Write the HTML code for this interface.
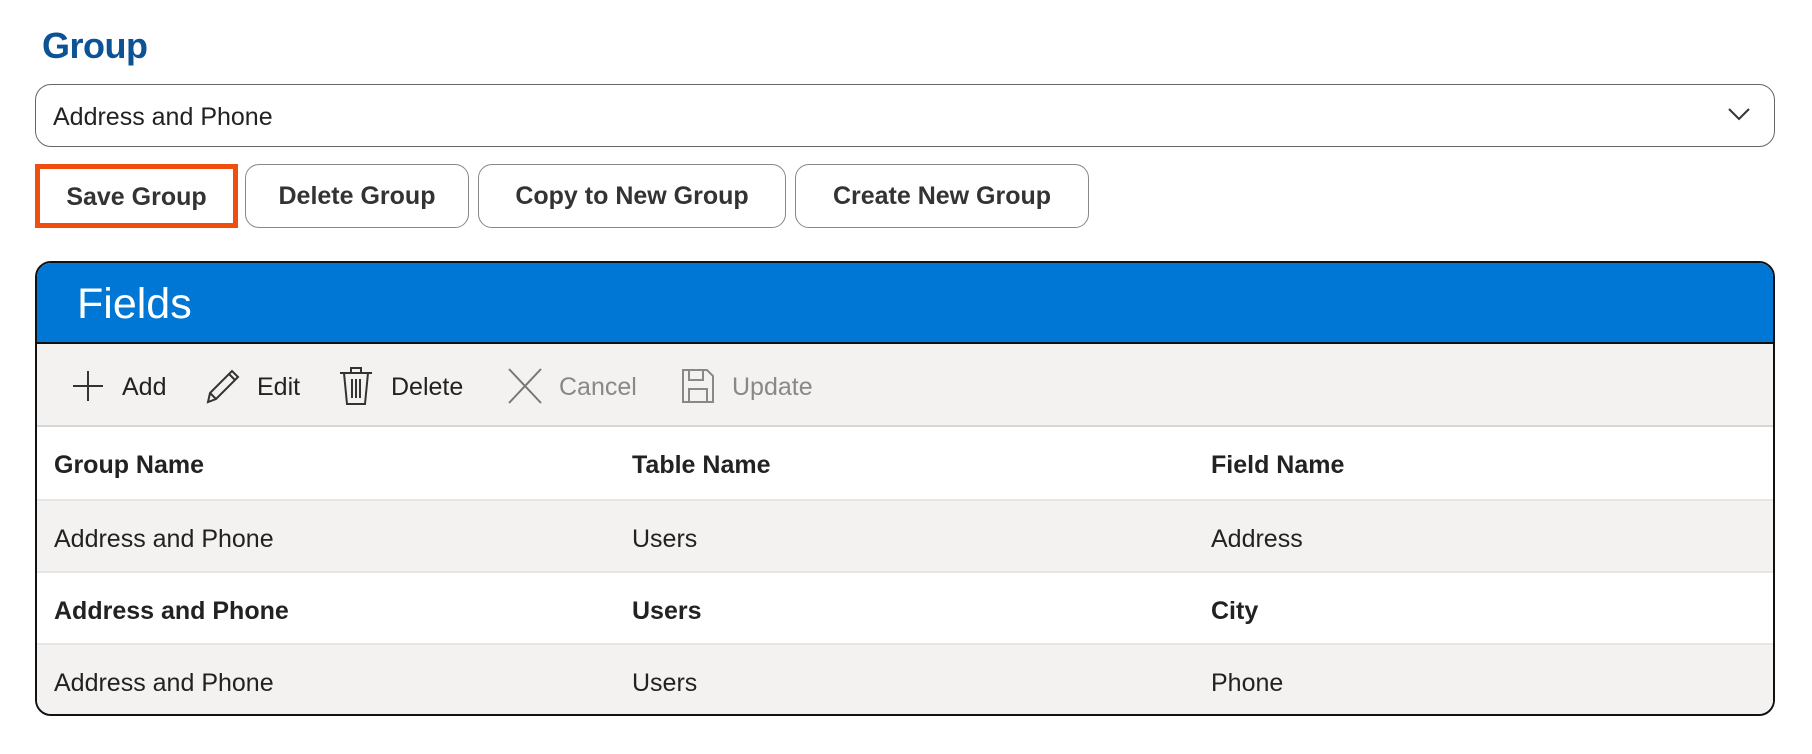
<!DOCTYPE html>
<html><head><meta charset="utf-8"><style>
*{box-sizing:border-box;margin:0;padding:0}
body{width:1812px;height:754px;background:#fff;font-family:"Liberation Sans",Arial,sans-serif;color:#222;position:relative;overflow:hidden}
.abs{position:absolute}
h1{position:absolute;left:42px;top:25px;font-size:36px;font-weight:bold;color:#0b5394;letter-spacing:-0.5px}
.sel{left:35px;top:84px;width:1740px;height:63px;border:1.5px solid #666;border-radius:16px;font-size:25px;line-height:64px;padding-left:17px}
.btn{top:164px;height:64px;border:1.5px solid #888;border-radius:14px;font-size:25px;font-weight:bold;text-align:center;line-height:63px;color:#333}
.save{border:5px solid #f04e0f;border-radius:0;line-height:56px}
.panel{left:35px;top:261px;width:1740px;height:455px;border:2px solid #111;border-radius:16px;overflow:hidden}
.hdr{height:81px;background:#0077d4;border-bottom:2px solid #111;color:#fff;font-size:43px;line-height:82px;padding-left:40px}
.tb{height:83px;background:#f3f2f1;border-bottom:2px solid #d6d6d6;position:relative;font-size:25px}
.tb span{position:absolute;top:29px}
.tb svg{position:absolute}
.row{height:72px;position:relative;font-size:25px;border-bottom:2px solid #e6e6e6}
.row div{position:absolute;top:24px}
.g{background:#f3f2f1}
.b{font-weight:bold}
</style></head><body>
<h1>Group</h1>
<div class="abs sel">Address and Phone
<svg class="abs" style="right:24px;top:22px" width="22" height="14" viewBox="0 0 22 14"><path d="M1 2l10 10 10-10" fill="none" stroke="#333" stroke-width="2"/></svg></div>
<div class="abs btn save" style="left:35px;width:203px">Save Group</div>
<div class="abs btn" style="left:245px;width:224px">Delete Group</div>
<div class="abs btn" style="left:478px;width:308px">Copy to New Group</div>
<div class="abs btn" style="left:795px;width:294px">Create New Group</div>
<div class="abs panel">
<div class="hdr">Fields</div>
<div class="tb">
<svg style="left:34px;top:25px" width="34" height="34" viewBox="0 0 34 34"><path d="M17 2v30M2 17h30" stroke="#333" stroke-width="2"/></svg>
<span style="left:85px">Add</span>
<svg style="left:167px;top:23px" width="38" height="38" viewBox="0 0 38 38"><path d="M4 35l2-9L28 4l6 6-22 22zM6 26l6 6M25 7l6 6" fill="none" stroke="#333" stroke-width="2"/></svg>
<span style="left:220px">Edit</span>
<svg style="left:301px;top:22px" width="36" height="40" viewBox="0 0 36 40"><path d="M2 7h32M13 7V2h10v5M6 7l3 31h18l3-31M14 13v19M18 13v19M22 13v19" fill="none" stroke="#333" stroke-width="2"/></svg>
<span style="left:354px">Delete</span>
<svg style="left:470px;top:23px" width="36" height="38" viewBox="0 0 36 38"><path d="M2 2l32 34M34 2L2 36" stroke="#777" stroke-width="2"/></svg>
<span style="left:522px;color:#888">Cancel</span>
<svg style="left:643px;top:23px" width="36" height="38" viewBox="0 0 36 38"><path d="M3 3h24l6 6v26H3zM9 3v10h14V3M9 35V22h18v13" fill="none" stroke="#888" stroke-width="2"/></svg>
<span style="left:695px;color:#888">Update</span>
</div>
<div class="row b" style="height:74px"><div style="left:17px">Group Name</div><div style="left:595px">Table Name</div><div style="left:1174px">Field Name</div></div>
<div class="row g"><div style="left:17px">Address and Phone</div><div style="left:595px">Users</div><div style="left:1174px">Address</div></div>
<div class="row b"><div style="left:17px">Address and Phone</div><div style="left:595px">Users</div><div style="left:1174px">City</div></div>
<div class="row g" style="border:0;height:80px"><div style="left:17px">Address and Phone</div><div style="left:595px">Users</div><div style="left:1174px">Phone</div></div>
</div>
</body></html>
